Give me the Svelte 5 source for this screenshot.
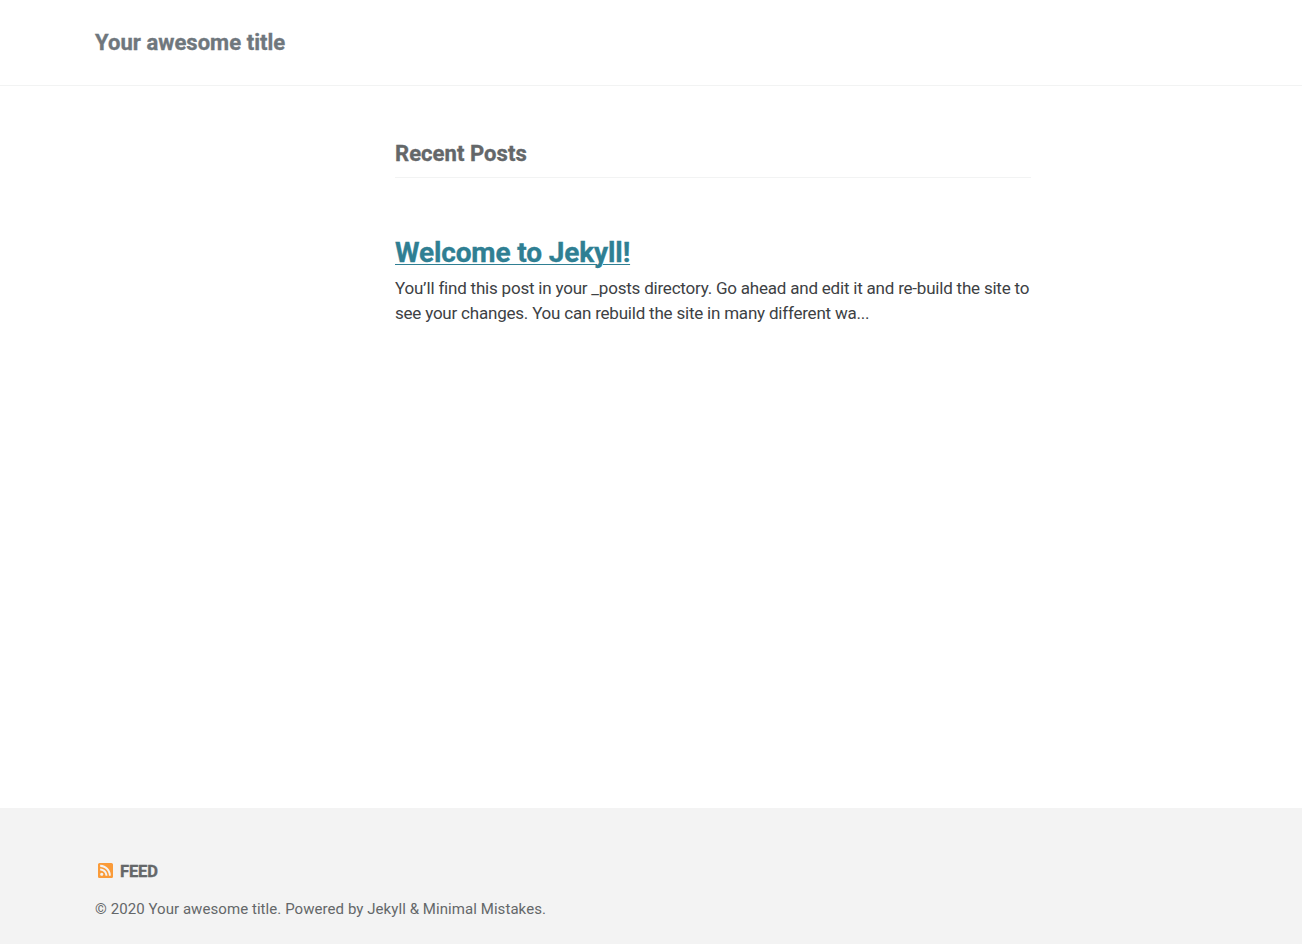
<script>
  const siteTitle = 'Your awesome title';
</script>

<div class="page">
  <header class="masthead">
    <div class="inner"><a class="site-title" href="/">{siteTitle}</a></div>
  </header>

  <main>
    <section class="archive">
      <h3 class="subtitle">Recent Posts</h3>
      <article>
        <h2><a href="#welcome">Welcome to Jekyll!</a></h2>
        <p>You’ll find this post in your _posts directory. Go ahead and edit it and re-build the site to<br />see your changes. You can rebuild the site in many different wa...</p>
      </article>
    </section>
  </main>

  <footer>
    <a class="feed" href="#feed">
      <svg viewBox="0 32 448 448" aria-hidden="true"><path fill="#fa9b39" d="M400 32H48C21.490 32 0 53.490 0 80v352c0 26.510 21.490 48 48 48h352c26.510 0 48-21.490 48-48V80c0-26.510-21.490-48-48-48zM112 416c-26.510 0-48-21.490-48-48s21.490-48 48-48 48 21.490 48 48-21.490 48-48 48zm157.533 0h-34.335c-6.011 0-11.051-4.636-11.442-10.634-5.214-80.050-69.243-143.920-149.123-149.123-5.997-.390-10.633-5.431-10.633-11.441v-34.335c0-6.535 5.468-11.777 11.994-11.425 110.546 5.974 198.997 94.536 204.964 204.964.352 6.526-4.890 11.994-11.425 11.994zm103.027 0h-34.334c-6.161 0-11.175-4.882-11.427-11.038-5.598-136.535-115.204-246.161-251.760-251.760C68.882 142.949 64 137.935 64 131.774V97.440c0-6.454 5.338-11.664 11.787-11.432 167.830 6.025 302.210 141.191 308.205 308.205.232 6.449-4.978 11.787-11.432 11.787z"/></svg>
      <span>FEED</span>
    </a>
    <div class="copyright">© 2020 Your awesome title. Powered by Jekyll &amp; Minimal Mistakes.</div>
  </footer>
</div>

<style>
  :global(body) { margin: 0; background: #fff; }
  .page {
    display: flex;
    flex-direction: column;
    height: 944px;
    overflow: hidden;
    color: #3d4144;
    font-family: Roboto, sans-serif;
  }
  a { color: inherit; text-decoration: none; }
  .masthead { box-sizing: border-box; height: 86px; border-bottom: 1px solid #f2f3f3; }
  .inner { padding: 28px 95px 0; line-height: 30px; }
  .site-title, .subtitle, h2 a, .feed { -webkit-text-stroke: 0.35px currentColor; }
  .site-title { color: #6f777d; font-size: 22px; font-weight: 700; letter-spacing: 0.04px; }
  main { flex: 1; padding-left: 395px; }
  .archive { width: 636px; }
  .subtitle {
    margin: 53px 0 0;
    padding-bottom: 8px;
    border-bottom: 1px solid #f2f3f3;
    color: #646769;
    font-size: 22px;
    line-height: 30px;
    font-weight: 700;
    letter-spacing: 0.06px;
  }
  h2 { margin: 58px 0 0; font-size: 28px; line-height: 34px; font-weight: 700; letter-spacing: -0.13px; }
  h2 a { color: #2f7f93; text-decoration: underline; text-decoration-thickness: 1px; text-underline-offset: 2px; }
  p { margin: 6px 0 0; font-size: 17px; line-height: 25px; letter-spacing: -0.21px; white-space: nowrap; }
  footer { box-sizing: border-box; height: 136px; padding: 53px 95px 0; background: #f3f3f3; color: #646769; }
  .feed { display: flex; align-items: center; gap: 7px; height: 20px; padding-left: 3px; font-size: 16.5px; font-weight: 700; letter-spacing: -0.15px; }
  .feed svg { width: 15px; height: 15px; margin-bottom: 1px; }
  .copyright { margin-top: 18px; font-size: 15px; line-height: 20px; letter-spacing: 0.066px; }
</style>
